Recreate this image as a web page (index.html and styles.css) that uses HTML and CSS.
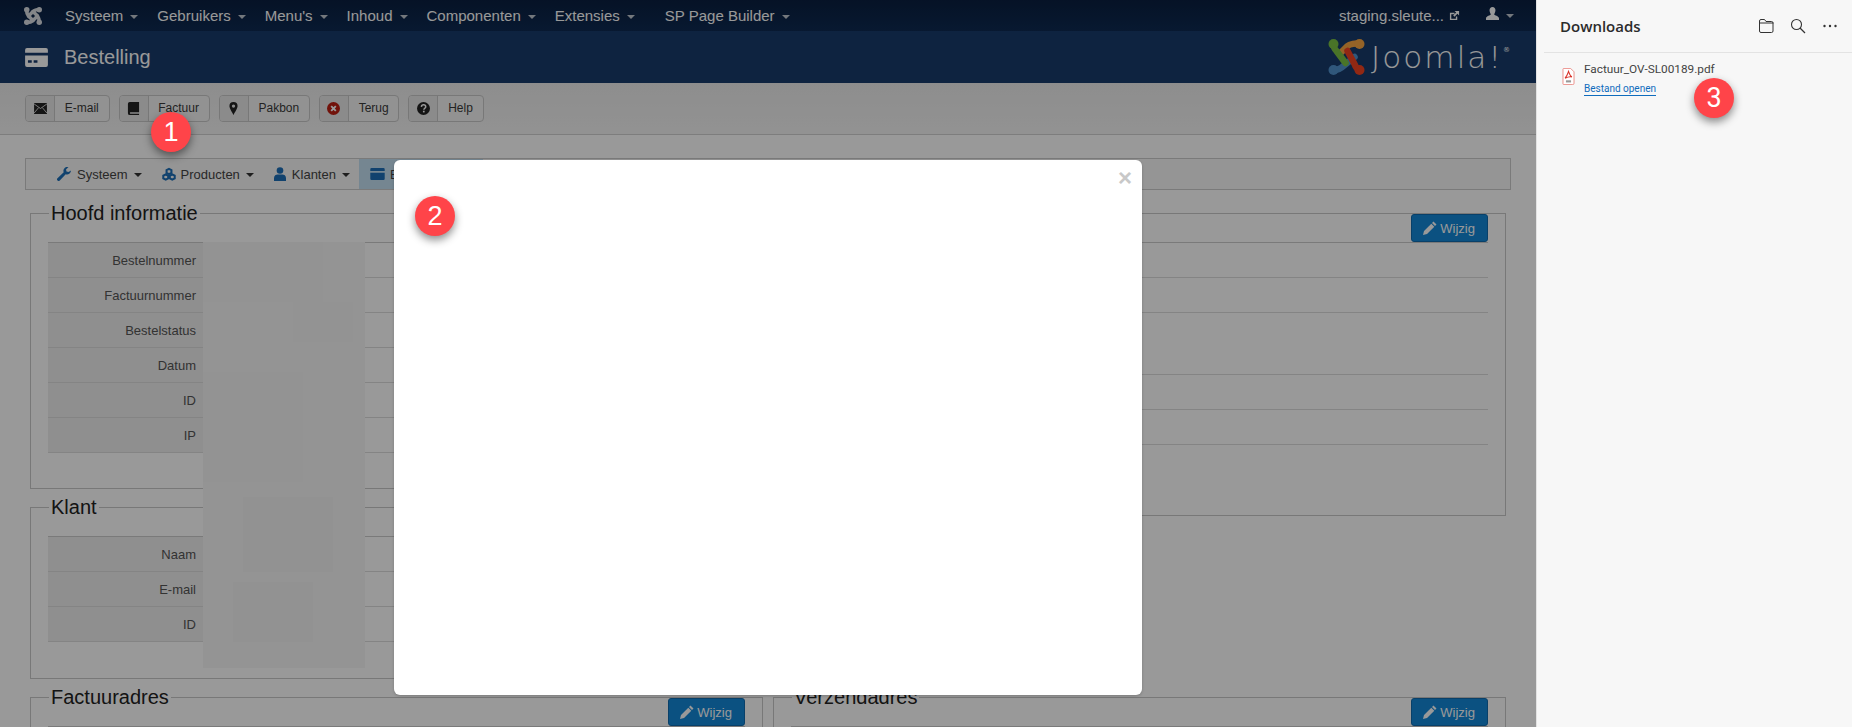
FILE: index.html
```html
<!DOCTYPE html>
<html lang="nl">
<head>
<meta charset="utf-8">
<title>Bestelling</title>
<link rel="stylesheet" href="styles.css">
</head>
<body>
<div class="app">
  <main class="main">
    <nav class="topnav">
      <svg class="jlogo-small" viewBox="0 0 36 36">
        <g fill="none" stroke="#fff" stroke-width="7" stroke-linecap="round">
          <path d="M31 5 C26 5 21 6 18 9 L9 18"/>
          <path d="M5 31 C10 31 15 30 18 27 L27 18"/>
          <path d="M5 5 C5 10 6 14 9 18 L18 27"/>
          <path d="M31 31 C31 26 30 22 27 18 L18 9"/>
        </g>
        <circle cx="5.500" cy="5.500" r="5.500" fill="#fff"/><circle cx="30.500" cy="5.500" r="5.500" fill="#fff"/><circle cx="30.500" cy="30.500" r="5.500" fill="#fff"/><circle cx="5.500" cy="30.500" r="5.500" fill="#fff"/>
      </svg>
      <span class="nav-item">Systeem<i class="caret"></i></span>
      <span class="nav-item">Gebruikers<i class="caret"></i></span>
      <span class="nav-item">Menu's<i class="caret"></i></span>
      <span class="nav-item">Inhoud<i class="caret"></i></span>
      <span class="nav-item">Componenten<i class="caret"></i></span>
      <span class="nav-item nav-wide">Extensies<i class="caret"></i></span>
      <span class="nav-item">SP Page Builder<i class="caret"></i></span>
      <span class="nav-right">
        <span class="site">staging.sleute...</span>
        <svg class="ico-ext" viewBox="0 0 12 12"><path d="M1 3h5v1.500H2.500v5h5V7H9v4H1z M6 1h5v5L9.200 4.200 6 7.400 4.600 6 7.800 2.800z" fill="#fff"/></svg>
        <svg class="ico-user-top" viewBox="0 0 14 14"><path d="M7 0c2 0 3.200 1.500 3.200 3.500S9 7 8.800 8c0 .8 5.200 1.800 5.200 4v2H0v-2c0-2.200 5.200-3.200 5.200-4C5 7 3.800 5.500 3.800 3.500S5 0 7 0z" fill="#fff"/></svg>
        <i class="caret"></i>
      </span>
    </nav>

    <header class="titlebar">
      <svg class="ico-title" viewBox="0 0 24 20"><path d="M2 0h20a2 2 0 0 1 2 2v3H0V2a2 2 0 0 1 2-2z M0 8h24v10a2 2 0 0 1-2 2H2a2 2 0 0 1-2-2z" fill="#fff"/><path d="M3 13h4v2.500H3z M9 13h4v2.500H9z" fill="#173a6b"/></svg>
      <h1 class="title">Bestelling</h1>
      <div class="brand">
        <svg class="jmark" viewBox="0 0 36 36">
          <g fill="none" stroke-linecap="round" stroke-linejoin="round" stroke-width="6.500">
            <path d="M32 5 C27 4 21 5 19 7 L11 15" stroke="#f9a541"/>
            <path d="M5 31 C10 31 13 29 15 27 L26 18" stroke="#5091cd"/>
            <path d="M5 5 C5 9 6 10 8 12 L17 24" stroke="#7ac143"/>
            <path d="M31 31 C28 30 27 28 26 25 L19 12" stroke="#f44321"/>
          </g>
          <circle cx="5" cy="5" r="5" fill="#7ac143"/>
          <circle cx="31" cy="5" r="5" fill="#f9a541"/>
          <circle cx="31" cy="31" r="5" fill="#f44321"/>
          <circle cx="5" cy="31" r="5" fill="#5091cd"/>
        </svg>
        <span class="wordmark">Joomla!<sup class="reg">®</sup></span>
      </div>
    </header>

    <div class="toolbar">
      <a class="tbtn"><span class="tbtn-ico"><svg class="i-mail" viewBox="0 0 14 12"><path d="M0 0h14v12H0z" fill="#222"/><path d="M0 1l7 5 7-5M0 11l5-6M14 11L9 5" fill="none" stroke="#eee" stroke-width=".9"/></svg></span><span class="tbtn-txt">E-mail</span></a>
      <a class="tbtn"><span class="tbtn-ico"><svg viewBox="0 0 12 14"><path d="M2 0h10v11H2.500a1 1 0 0 0 0 1.600H12V14H2a2 2 0 0 1-2-2V2a2 2 0 0 1 2-2z" fill="#222"/></svg></span><span class="tbtn-txt">Factuur</span></a>
      <a class="tbtn"><span class="tbtn-ico"><svg viewBox="0 0 10 16"><path fill-rule="evenodd" d="M5 0a5 5 0 0 1 5 5c0 3-3.500 8-5 11C3.500 13 0 8 0 5a5 5 0 0 1 5-5zm0 3a2 2 0 1 0 0 4 2 2 0 0 0 0-4z" fill="#222"/></svg></span><span class="tbtn-txt">Pakbon</span></a>
      <a class="tbtn"><span class="tbtn-ico"><svg viewBox="0 0 14 14"><circle cx="7" cy="7" r="7" fill="#bd1e12"/><path d="M4.500 4.500l5 5m0-5l-5 5" stroke="#fff" stroke-width="2"/></svg></span><span class="tbtn-txt">Terug</span></a>
      <a class="tbtn"><span class="tbtn-ico"><svg viewBox="0 0 14 14"><circle cx="7" cy="7" r="7" fill="#222"/><path d="M4.700 5.300C4.800 3.800 5.800 3 7.100 3c1.400 0 2.300.8 2.300 2 0 1.800-2 1.700-2 3.300" fill="none" stroke="#fff" stroke-width="1.600"/><rect x="6.400" y="9.400" width="1.800" height="1.800" fill="#fff"/></svg></span><span class="tbtn-txt">Help</span></a>
    </div>

    <div class="content">
      <div class="subnav">
        <span class="sub-item"><svg class="sub-ico" viewBox="0 0 14 14"><path d="M14 3.500a4 4 0 0 1-5.300 3.800L2.800 13.500a1.500 1.500 0 0 1-2.300-2.300l6.200-5.900A4 4 0 0 1 11.500 0L9 2.500 9.500 4.500 11.500 5z" fill="#1d6fb8"/></svg>Systeem<i class="caret dark"></i></span>
        <span class="sub-item"><svg class="sub-ico sub-cubes" viewBox="0 0 15 14"><g fill="none" stroke="#1d6fb8" stroke-width="2.200"><path d="M7.500 1.500l2.600 1.300v3L7.500 7.100 4.900 5.800v-3z"/><path d="M4 7.500l2.600 1.300v3L4 13.100 1.400 11.800v-3z"/><path d="M11 7.500l2.600 1.300v3L11 13.100 8.400 11.800v-3z"/></g></svg>Producten<i class="caret dark"></i></span>
        <span class="sub-item"><svg class="sub-ico sub-user" viewBox="0 0 12 14"><circle cx="6" cy="3.500" r="3.300" fill="#1d6fb8"/><path d="M0 14v-3c0-2.500 2-3.500 3.500-3.500h5C10 7.500 12 8.500 12 11v3z" fill="#1d6fb8"/></svg>Klanten<i class="caret dark"></i></span>
        <span class="sub-item sub-active"><svg class="sub-ico sub-card" viewBox="0 0 24 20"><path d="M2 0h20a2 2 0 0 1 2 2v3H0V2a2 2 0 0 1 2-2z M0 8h24v10a2 2 0 0 1-2 2H2a2 2 0 0 1-2-2z" fill="#1d6fb8"/></svg>Bestelling<i class="caret dark"></i></span>
      </div>

      <div class="columns">
        <fieldset class="fs fs-plain fs-hoofd">
          <legend class="fs-legend">Hoofd informatie</legend>
          <table class="info">
            <tr><th>Bestelnummer</th><td></td></tr>
            <tr><th>Factuurnummer</th><td></td></tr>
            <tr><th>Bestelstatus</th><td></td></tr>
            <tr><th>Datum</th><td></td></tr>
            <tr><th>ID</th><td></td></tr>
            <tr><th>IP</th><td></td></tr>
          </table>
        </fieldset>

        <fieldset class="fs fs-side">
          <legend class="fs-legend">Betaling</legend>
          <div class="fs-head"><a class="edit"><svg viewBox="0 0 14 14"><path d="M10.500 0.500l3 3-1.500 1.500-3-3z M8.300 2.700l3 3L4 13 0 14l1-4z" fill="#fff"/></svg>Wijzig</a></div>
          <table class="info">
            <tr><th></th><td></td></tr>
            <tr><th></th><td></td></tr>
            <tr class="tall"><th></th><td></td></tr>
            <tr><th></th><td></td></tr>
            <tr><th></th><td></td></tr>
          </table>
        </fieldset>

        <fieldset class="fs fs-plain fs-klant">
          <legend class="fs-legend">Klant</legend>
          <table class="info">
            <tr><th>Naam</th><td></td></tr>
            <tr><th>E-mail</th><td></td></tr>
            <tr><th>ID</th><td></td></tr>
          </table>
        </fieldset>

        <fieldset class="fs fs-bill">
          <legend class="fs-legend">Factuuradres</legend>
          <div class="fs-head"><a class="edit"><svg viewBox="0 0 14 14"><path d="M10.500 0.500l3 3-1.500 1.500-3-3z M8.300 2.700l3 3L4 13 0 14l1-4z" fill="#fff"/></svg>Wijzig</a></div>
          <table class="info"><tr><th></th><td></td></tr></table>
        </fieldset>

        <fieldset class="fs fs-ship">
          <legend class="fs-legend">Verzendadres</legend>
          <div class="fs-head"><a class="edit"><svg viewBox="0 0 14 14"><path d="M10.500 0.500l3 3-1.500 1.500-3-3z M8.300 2.700l3 3L4 13 0 14l1-4z" fill="#fff"/></svg>Wijzig</a></div>
          <table class="info"><tr><th></th><td></td></tr></table>
        </fieldset>
      </div>
    </div>

    <div class="redact"></div>
    <div class="backdrop"></div>

    <div class="modal"><span class="close">×</span></div>
    <span class="badge badge-1">1</span>
    <span class="badge badge-2">2</span>
  </main>

  <aside class="downloads">
    <div class="dl-head">
      <span class="dl-title">Downloads</span>
      <span class="dl-actions">
        <svg viewBox="0 0 16 16"><path d="M3 1.500h3.500l1.500 2h5.500a1.500 1.500 0 0 1 1.500 1.500v8a1.500 1.500 0 0 1-1.500 1.500h-10.500A1.500 1.500 0 0 1 1.500 13V3A1.500 1.500 0 0 1 3 1.500zM1.500 5h14" fill="none" stroke="#333" stroke-width="1"/></svg>
        <svg viewBox="0 0 16 16"><circle cx="6.500" cy="6.500" r="5" fill="none" stroke="#333" stroke-width="1.100"/><path d="M10 10l5 5" stroke="#333" stroke-width="1.200"/></svg>
        <svg viewBox="0 0 16 16"><circle cx="2.500" cy="8" r="1.200" fill="#333"/><circle cx="8" cy="8" r="1.200" fill="#333"/><circle cx="13.500" cy="8" r="1.200" fill="#333"/></svg>
      </span>
    </div>
    <div class="dl-item">
      <svg class="pdf" viewBox="0 0 14 20"><path d="M1.500.5h8l4 4v13.500a1.500 1.500 0 0 1-1.500 1.500H1.500A1 1 0 0 1 .5 18.500V1.500a1 1 0 0 1 1-1z" fill="#fff" stroke="#e9827c"/><path d="M7 4c-1 3-1.500 5-4 8 2-1 6-2 8-1.500C9 9.500 8 7 7 4z" fill="none" stroke="#d9342b" stroke-width="1.300"/><rect x="4" y="14.500" width="6" height="2.500" fill="#999"/></svg>
      <div class="dl-text">
        <div class="dl-name">Factuur_OV-SL00189.pdf</div>
        <a class="dl-open">Bestand openen</a>
      </div>
    </div>
    <span class="badge badge-3">3</span>
  </aside>
</div>
</body>
</html>
```

FILE: styles.css
```css
* { box-sizing: border-box; }
html, body { margin: 0; height: 727px; overflow: hidden; }
body { font-family: "Liberation Sans", Arial, sans-serif; color: #333; background: #fff; }
.app { display: flex; width: 1852px; height: 727px; }

.main { position: relative; width: 1536px; height: 727px; overflow: hidden; background: #fff; flex: none; }

.caret { display: inline-block; width: 0; height: 0; margin-left: 7px; vertical-align: middle; border-top: 4px solid #fff; border-left: 4px solid transparent; border-right: 4px solid transparent; opacity: .75; }
.caret.dark { border-top-color: #333; opacity: 1; margin-left: 6px; }

.topnav { display: flex; align-items: center; height: 31px; padding-left: 24px; background: linear-gradient(#0a1f40, #0e2a52); color: #fff; font-size: 15px; }
.jlogo-small { width: 18px; height: 18px; margin-right: 23px; opacity: .85; }
.nav-item { margin-right: 19px; white-space: nowrap; }
.nav-wide { margin-right: 30px; }
.nav-right { display: flex; align-items: center; margin-left: auto; padding-right: 22px; font-size: 15px; }
.site { white-space: nowrap; }
.ico-ext { width: 11px; height: 11px; margin-left: 5px; }
.ico-user-top { width: 13px; height: 13px; margin-left: 26px; position: relative; top: -2px; }

.titlebar { display: flex; align-items: center; height: 52px; padding: 0 26px 0 25px; background: #183b6b; color: #fff; }
.ico-title { width: 23px; height: 19px; margin-right: 16px; }
.title { margin: 0; font-size: 20px; font-weight: 400; }
.brand { display: flex; align-items: center; margin-left: auto; }
.jmark { width: 37px; height: 36px; display: block; }
.wordmark { font-family: "DejaVu Sans", Inter, sans-serif; font-weight: 200; font-size: 31px; line-height: 36px; letter-spacing: 2.100px; margin-left: 6px; white-space: nowrap; color: #fff; }
.reg { font-size: 7px; font-weight: 400; vertical-align: 16px; line-height: 0; letter-spacing: 0; }

.toolbar { display: flex; gap: 9px; height: 52px; padding: 12px 25px 0; background: linear-gradient(#ececec, #f4f4f4); border-bottom: 1px solid #d0d0d0; }
.tbtn { display: flex; height: 27px; border: 1px solid #c8c8c8; border-radius: 4px; background: #f4f4f4; font-size: 12px; color: #3a3a3a; }
.tbtn-ico { display: flex; align-items: center; justify-content: center; width: 29px; background: #e8e8e8; border-right: 1px solid #c8c8c8; border-radius: 3px 0 0 3px; }
.tbtn-ico svg { width: 13px; height: 13px; }
.tbtn-ico .i-mail { height: 11px; }
.tbtn-txt { padding: 0 9.750px; line-height: 25px; white-space: nowrap; }

.content { padding: 23px 25px 0; }
.subnav { display: flex; height: 32px; padding-left: 21px; border: 1px solid #ccc; background: #f8f8f8; font-size: 13px; color: #444; }
.sub-item { display: flex; align-items: center; padding: 0 10px; white-space: nowrap; }
.sub-item .caret { margin-top: 1px; }
.sub-ico { width: 14px; height: 14px; margin-right: 6px; }
.sub-cubes { margin-right: 5px; }
.sub-user { width: 12px; }
.sub-active { width: 124px; padding-left: 11px; background: #c3dff2; margin-left: -1px; }
.sub-card { width: 15px; height: 12px; margin-right: 5px; }

.columns { display: grid; grid-template-columns: 733px 733px; column-gap: 10px; row-gap: 5px; margin: 10px 0 0 5px; align-items: start; }
.fs { position: relative; margin: 0; padding: 0 17px 35px; min-width: 0; border: 1px solid #c8c8c8; }
.fs-plain { padding-top: 16px; }
.fs-hoofd { grid-column: 1; grid-row: 1; }
.fs-side { grid-column: 2; grid-row: 1 / span 2; padding-bottom: 70px; }
.fs-klant { grid-column: 1; grid-row: 2; padding-bottom: 36px; }
.fs-bill { grid-column: 1; grid-row: 3; }
.fs-ship { grid-column: 2; grid-row: 3; }
.fs-legend { margin: 0 0 0 1px; padding: 0 2px; font-size: 20px; line-height: 26px; color: #222; white-space: nowrap; }
.fs-head { display: flex; justify-content: flex-end; height: 28px; margin-top: -12px; }
.edit { display: flex; align-items: center; height: 28px; padding: 0 12px 0 11px; border: 1px solid #0f6cb0; border-radius: 3px; background: #1387d8; color: #fff; font-size: 13px; }
.edit svg { width: 14px; height: 14px; margin-right: 3px; }

.info { width: 100%; border-collapse: collapse; border-top: 1px solid #ccc; }
.info th { width: 155px; height: 35px; padding: 0 7px 0 0; text-align: right; font-weight: 400; font-size: 13px; color: #555; background: #eee; border-bottom: 1px solid #ddd; }
.info td { height: 35px; border-bottom: 1px solid #ddd; }
.fs-side .info th { background: transparent; }
.tall th, .tall td { height: 62px; }

.redact {
  position: absolute; left: 203px; top: 242px; width: 162px; height: 426px;
  background-color: #f7f7f7;
  background-image:
    linear-gradient(#f5f5f5, #f5f5f5), linear-gradient(#f4f4f4, #f4f4f4), linear-gradient(#f5f5f5, #f5f5f5), linear-gradient(#f4f4f4, #f4f4f4), linear-gradient(#f6f6f6, #f6f6f6);
  background-size: 120px 60px, 90px 75px, 100px 110px, 80px 60px, 60px 40px;
  background-position: 0 0, 40px 255px, 0 130px, 30px 340px, 90px 60px;
  background-repeat: no-repeat;
}
.backdrop { position: absolute; inset: 0; background: rgba(0, 0, 0, .4); }

.modal { position: absolute; left: 394px; top: 160px; width: 748px; height: 535px; display: flex; justify-content: flex-end; padding: 4px 10px 0 0; background: #fff; border-radius: 6px; box-shadow: 0 1px 3px rgba(0, 0, 0, .2); }
.close { font-size: 24px; line-height: 28px; font-weight: 700; color: #c8c8c8; }

.badge { position: absolute; display: flex; align-items: center; justify-content: center; width: 40px; height: 40px; border-radius: 50%; background: #ff4449; color: #fff; font-size: 27px; box-shadow: 0 4px 8px rgba(0, 0, 0, .45); }
.badge-1 { left: 151px; top: 112px; }
.badge-2 { left: 415px; top: 196px; }
.badge-3 { left: 157px; top: 78px; }

.downloads { position: relative; flex: 1; height: 727px; background: #f7f7f7; border-left: 1px solid #e2e2e2; font-family: Roboto, "Open Sans", sans-serif; }
.dl-head { display: flex; align-items: flex-start; justify-content: space-between; height: 53px; margin-left: 7px; padding: 16px 14px 0 16px; border-bottom: 1px solid #e3e3e3; }
.dl-title { font-family: "Open Sans", sans-serif; font-size: 15px; line-height: 20px; font-weight: 600; color: #2b2b2b; }
.dl-actions { display: flex; gap: 16px; align-items: center; height: 20px; }
.dl-actions svg { width: 16px; height: 16px; display: block; }
.dl-item { display: flex; gap: 9px; padding: 8px 0 0 25px; }
.pdf { width: 13px; height: 17px; margin-top: 7px; }
.dl-name { font-size: 11.800px; line-height: 16px; color: #444; white-space: nowrap; }
.dl-open { display: inline-block; margin-top: 0; font-size: 10px; line-height: 13px; color: #0f6cbd; border-bottom: 1px solid #0f6cbd; white-space: nowrap; }
```
